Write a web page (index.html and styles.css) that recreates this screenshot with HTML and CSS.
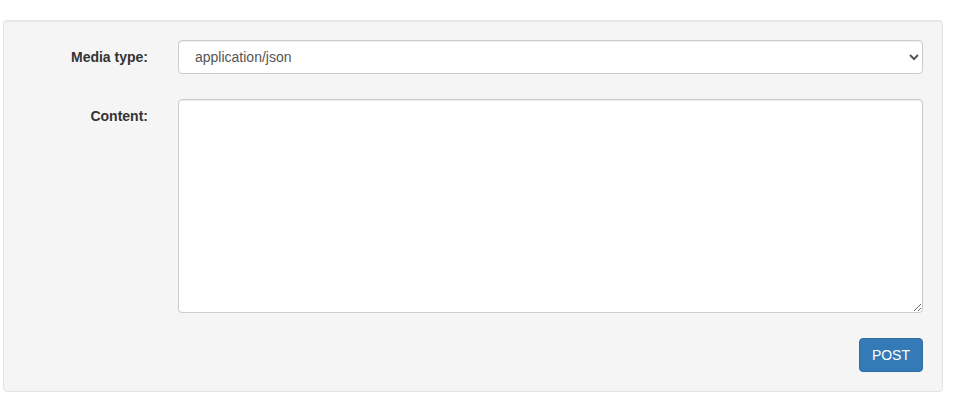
FILE: index.html
```html
<!DOCTYPE html>
<html>
<head>
<meta charset="utf-8">
<link rel="stylesheet" href="styles.css">
</head>
<body>
<div class="well">
  <form class="form-horizontal">
    <div class="form-group">
      <label class="control-label" for="media">Media type:</label>
      <div class="control">
        <select id="media" class="form-control">
          <option>application/json</option>
        </select>
      </div>
    </div>
    <div class="form-group">
      <label class="control-label" for="content">Content:</label>
      <div class="control">
        <textarea id="content" class="form-control textarea"></textarea>
      </div>
    </div>
    <div class="form-actions">
      <button type="button" class="btn">POST</button>
    </div>
  </form>
</div>
</body>
</html>
```

FILE: styles.css
```css
* { box-sizing: border-box; }
html, body { margin: 0; padding: 0; background: #fff; }
body {
  font-family: "Liberation Sans", Arial, Helvetica, sans-serif;
  font-size: 14px;
  line-height: 20px;
  color: #333;
}
.well {
  margin: 20px 0 0 3px;
  width: 940px;
  padding: 19px;
  background: #f5f5f5;
  border: 1px solid #e3e3e3;
  border-radius: 4px;
  box-shadow: inset 0 1px 1px rgba(0,0,0,0.05);
}
.form-horizontal { margin: 0; }
.form-group {
  display: flex;
  margin-bottom: 25px;
}
.control-label {
  width: 125px;
  flex: none;
  padding: 7px 0 0;
  margin-right: 30px;
  text-align: right;
  font-weight: bold;
}
.control {
  flex: 1;
}
.form-control {
  display: block;
  width: 745px;
  height: 34px;
  padding: 6px 12px;
  font-family: inherit;
  font-size: 14px;
  line-height: 20px;
  color: #555;
  background: #fff;
  border: 1px solid #ccc;
  border-radius: 4px;
  box-shadow: inset 0 1px 1px rgba(0,0,0,0.075);
}
.textarea {
  height: 214px;
  resize: vertical;
}
.form-actions {
  display: flex;
  justify-content: flex-end;
  width: 900px;
}
.btn {
  height: 34px;
  padding: 6px 12px;
  font-family: inherit;
  font-size: 14px;
  line-height: 20px;
  color: #fff;
  background: #337ab7;
  border: 1px solid #2e6da4;
  border-radius: 4px;
  cursor: pointer;
}
```
